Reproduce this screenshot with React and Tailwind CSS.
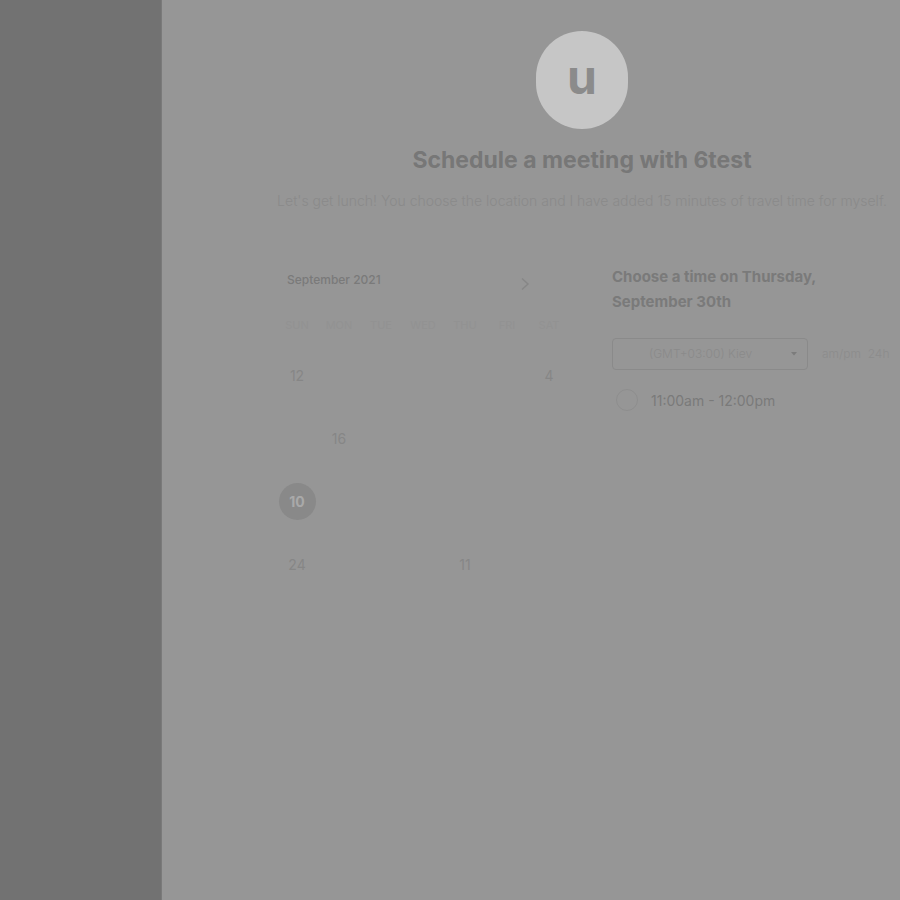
import React from "react";

const weekdays = ["SUN", "MON", "TUE", "WED", "THU", "FRI", "SAT"];
const rows = [
  ["12", "", "", "", "", "", "4"],
  ["", "16", "", "", "", "", ""],
  ["10", "", "", "", "", "", ""],
  ["24", "", "", "", "11", "", ""],
  ["", "", "", "", "", "", ""],
];

export default function App() {
  return (
    <div className="flex w-[900px] h-[900px] overflow-hidden" style={{ fontFamily: "Inter, 'Liberation Sans', sans-serif" }}>
      <div className="w-[162px] h-full bg-[#727272] border-r border-[#7a7a7a]" />
      <div className="flex-1 h-full bg-[#969696] pl-[109px]">
        <div className="w-[622px] flex flex-col items-center">
          <div className="mt-[31px] w-[92px] h-[98px] rounded-full bg-[#c6c6c6] flex items-center justify-center">
            <span className="text-[48px] leading-none font-bold text-[#8b8b8b] -mt-[6px]">u</span>
          </div>
          <h1 className="mt-[17px] text-[23px] leading-[28px] font-bold text-[#777777]">Schedule a meeting with 6test</h1>
          <p className="mt-[17px] text-[14px] leading-[20px] font-light text-[#8a8a8a] whitespace-nowrap">
            Let's get lunch! You choose the location and I have added 15 minutes of travel time for myself.
          </p>
        </div>
        <div className="mt-[58px] flex">
          <div className="ml-[5px] w-[294px]">
            <div className="flex items-center justify-between h-[22px] pl-[11px] pr-[40px]">
              <span className="text-[12px] font-medium text-[#7a7a7a]">September 2021</span>
              <svg width="10" height="14" viewBox="0 0 10 14" className="mt-[8px]">
                <path d="M2 1.5 L8 7 L2 12.5" fill="none" stroke="#868686" strokeWidth="1.4" />
              </svg>
            </div>
            <div className="grid grid-cols-7 mt-[22px]">
              {weekdays.map((d) => (
                <div key={d} className="h-[24px] flex items-center justify-center text-[11px] text-[#929292]">{d}</div>
              ))}
            </div>
            <div className="mt-[7px] flex flex-col">
              {rows.map((r, i) => (
                <div key={i} className="grid grid-cols-7 h-[63px]">
                  {r.map((c, j) => (
                    <div key={j} className="flex items-center justify-center">
                      {c === "10" ? (
                        <div className="w-[37px] h-[37px] rounded-full bg-[#898989] flex items-center justify-center text-[14px] font-bold text-[#a9a9a9]">10</div>
                      ) : (
                        <span className="text-[14px] text-[#868686]">{c}</span>
                      )}
                    </div>
                  ))}
                </div>
              ))}
            </div>
          </div>
          <div className="ml-[42px] flex flex-col">
            <div className="text-[15px] leading-[25px] font-bold text-[#7a7a7a] -mt-[5px]">
              Choose a time on Thursday,
              <br />
              September 30th
            </div>
            <div className="mt-[24px] flex items-center">
              <div className="w-[196px] h-[32px] border border-[#8a8a8a] rounded-[4px] flex items-center pl-[36px] pr-[10px] justify-between">
                <span className="text-[12px] font-light text-[#8a8a8a]">(GMT+03:00) Kiev</span>
                <svg width="6" height="4" viewBox="0 0 6 4"><path d="M0 0 L6 0 L3 3.5 Z" fill="#7c7c7c" /></svg>
              </div>
              <span className="ml-[14px] text-[12px] font-light text-[#8c8c8c]">am/pm&nbsp;&nbsp;24h</span>
            </div>
            <div className="mt-[19px] flex items-center">
              <div className="ml-[4px] w-[22px] h-[22px] rounded-full border border-[#8e8e8e]" />
              <span className="ml-[13px] text-[14px] text-[#7a7a7a]">11:00am - 12:00pm</span>
            </div>
          </div>
        </div>
      </div>
    </div>
  );
}
